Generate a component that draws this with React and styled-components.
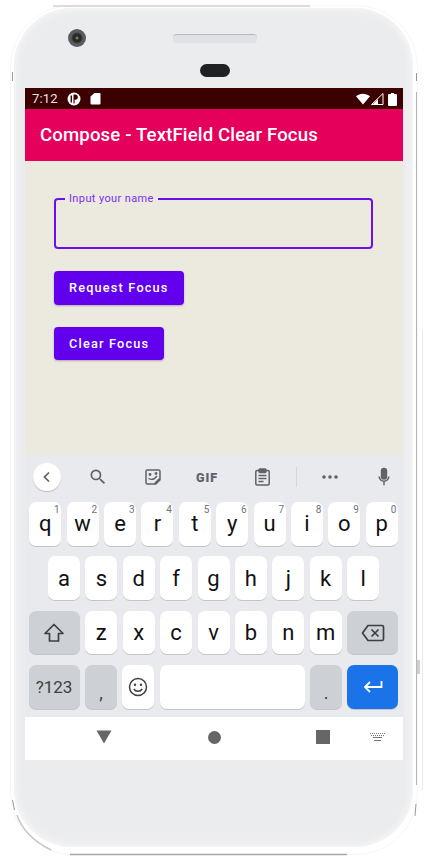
import React from "react"
import styled, { createGlobalStyle } from 'styled-components'

const GlobalStyle = createGlobalStyle`
    html, body {
        margin: 0;
        padding: 0;
        background: #fff;
    }
    * {
        box-sizing: border-box;
    }
`

const Page = styled.div`
    position: relative;
    width: 427px;
    height: 860px;
    padding: 8px 0 0 14px;
    overflow: hidden;
    background: #fff;
    font-family: Roboto, "Liberation Sans", sans-serif;
`

const Rim = styled.svg`
    position: absolute;
    top: 0;
    left: 0;
    pointer-events: none;
`

const Phone = styled.div`
    position: relative;
    width: 399px;
    height: 839px;
    padding: 0 10px 0 11px;
    border-radius: 58px;
    background: #ebecee;
    box-shadow: inset 0 0 7px 2px #f7f7f8;
    display: flex;
    flex-direction: column;
`

const Bezel = styled.div`
    position: relative;
    height: 80px;
    flex: none;
    display: flex;
    flex-direction: column;
    align-items: center;
`

const Camera = styled.div`
    position: absolute;
    left: 43px;
    top: 21px;
    width: 18px;
    height: 18px;
    border-radius: 50%;
    background: radial-gradient(circle, #7d7a3c 0 1px, #26282a 2px 4px, #5a5d60 6px 9px);
`

const Speaker = styled.div`
    width: 84px;
    height: 9px;
    margin-top: 26px;
    margin-left: 1px;
    border-radius: 4px;
    border-top: 1px solid #b4bbc0;
    background: #e0e2e5;
`

const Sensor = styled.div`
    width: 30px;
    height: 13px;
    margin-top: 21px;
    margin-left: 1px;
    border-radius: 7px;
    background: #1f2123;
`

const Screen = styled.div`
    width: 378px;
    height: 672px;
    flex: none;
    display: flex;
    flex-direction: column;
`

const StatusBar = styled.div`
    height: 21px;
    flex: none;
    padding: 0 6px 0 7px;
    display: flex;
    align-items: center;
    background: #3c0000;
    color: #eee3e3;
    font-size: 13px;
`

const StatusTime = styled.span`
    width: 35px;
    letter-spacing: 0.2px;
`

const StatusGroup = styled.div`
    display: flex;
    align-items: center;
    gap: 9px;
    margin-left: ${props => props.$end ? 'auto' : '0'};
`

const AppBar = styled.div`
    height: 52px;
    flex: none;
    padding-left: 15px;
    display: flex;
    align-items: center;
    background: #e5005c;
    color: #fff;
    font-size: 18.6px;
    font-weight: 500;
    letter-spacing: 0.14px;
`

const Content = styled.div`
    height: 294px;
    flex: none;
    padding: 37px 30px 0 29px;
    display: flex;
    flex-direction: column;
    align-items: flex-start;
    gap: 22px;
    background: #ece9df;
`

const Field = styled.div`
    position: relative;
    width: 319px;
    height: 51px;
`

const FieldLabel = styled.label`
    position: absolute;
    left: 11px;
    top: -6px;
    padding: 0 4px;
    background: #ece9df;
    color: #7b2ff0;
    font-size: 11px;
    line-height: 13px;
    letter-spacing: 0.38px;
`

const FieldInput = styled.input`
    display: block;
    width: 100%;
    height: 100%;
    border: 2px solid #6a10ee;
    border-radius: 4px;
    outline: none;
    background: transparent;
`

const Button = styled.button`
    height: 33.5px;
    padding: 0 15px;
    border: 0;
    border-radius: 4px;
    background: #6200ee;
    color: #fff;
    font-family: inherit;
    font-size: 12.7px;
    font-weight: 500;
    letter-spacing: 1.2px;
    box-shadow: 0 1px 2px rgba(60, 40, 110, 0.35);
`

const Keyboard = styled.div`
    height: 262px;
    flex: none;
    display: flex;
    flex-direction: column;
    background: #e8eaed;
`

const Toolbar = styled.div`
    height: 47px;
    flex: none;
    padding-bottom: 3px;
    display: grid;
    grid-template-columns: 44px 58px 52px 56px 54px 14px 54px 46px;
    align-items: center;
    justify-items: center;
`

const BackButton = styled.div`
    width: 28px;
    height: 28px;
    border-radius: 50%;
    background: #fff;
    box-shadow: 0 1px 1px rgba(60, 64, 67, 0.25);
    display: flex;
    align-items: center;
    justify-content: center;
`

const GifLabel = styled.span`
    color: #5f6368;
    font-size: 12.5px;
    font-weight: 900;
    letter-spacing: 1px;
`

const Divider = styled.div`
    width: 1px;
    height: 20px;
    background: #d5d7da;
`

const MicSlot = styled.div`
    padding-left: 8px;
    display: flex;
`

const Rows = styled.div`
    padding: 0 5px 0 4px;
    display: flex;
    flex-direction: column;
    gap: 10.9px;
`

const KeyRow = styled.div`
    height: 43.5px;
    display: flex;
    justify-content: center;
    gap: 5.4px;
`

const Key = styled.div`
    position: relative;
    width: ${props => props.$width || 32}px;
    flex: none;
    border-radius: 7px;
    background: ${props => props.$tone === 'gray' ? '#cdd0d5' : props.$tone === 'blue' ? '#1a73e8' : '#fff'};
    box-shadow: 0 1px 0 #c2c5ca;
    display: flex;
    align-items: center;
    justify-content: center;
    color: ${props => props.$tone === 'gray' ? '#3c4043' : '#111'};
    font-size: ${props => props.$small ? 17 : 22}px;
`

const Hint = styled.span`
    position: absolute;
    top: 2px;
    right: 1.5px;
    color: #6f7377;
    font-size: 10px;
    line-height: 12px;
`

const Punct = styled.span`
    margin-top: 12px;
    font-size: 18px;
`

const NavBar = styled.div`
    height: 43px;
    flex: none;
    padding: 0 0 3px 62px;
    display: grid;
    grid-template-columns: 110px 109px 54px 34px;
    align-items: center;
    background: #fff;
`

const NavSlot = styled.div`
    width: 34px;
    display: flex;
    justify-content: center;
`

const Triangle = () => (
    <svg width="16" height="14" viewBox="0 0 16 14"><path d="M0.5 0.5h15L8 13.5z" fill="#666" /></svg>
)

const Icon = ({ size = 24, box = 24, color = '#5f6368', children }) => (
    <svg width={size} height={size} viewBox={`0 0 ${box} ${box}`} fill={color}>{children}</svg>
)

const rows = [
    ['q1', 'w2', 'e3', 'r4', 't5', 'y6', 'u7', 'i8', 'o9', 'p0'],
    ['a', 's', 'd', 'f', 'g', 'h', 'j', 'k', 'l'],
]

const lowerLetters = ['z', 'x', 'c', 'v', 'b', 'n', 'm']

const App = () => (
    <Page>
        <GlobalStyle />
        <Phone>
            <Bezel>
                <Camera />
                <Speaker />
                <Sensor />
            </Bezel>
            <Screen>
                <StatusBar>
                    <StatusTime>7:12</StatusTime>
                    <StatusGroup>
                        <svg width="14" height="14" viewBox="0 0 14 14">
                            <circle cx="7" cy="7" r="6.5" fill="#fff" />
                            <path d="M6.5 2.5h1.7a2.6 2.6 0 0 1 0 5.2H7.6v3.8H6.5z" fill="#3c0000" />
                            <rect x="3.6" y="3.5" width="1.4" height="7" fill="#3c0000" />
                        </svg>
                        <svg width="11" height="13" viewBox="0 0 11 13">
                            <path d="M4.5 1h5a1 1 0 0 1 1 1v9.5a1 1 0 0 1-1 1h-8a1 1 0 0 1-1-1V4.5z" fill="#fff" />
                        </svg>
                    </StatusGroup>
                    <StatusGroup $end>
                        <svg width="28" height="14" viewBox="0 0 28 14">
                            <path d="M0 4.200C3.800 0.800 10 0.800 14 4.200L7 12.500z" fill="#fff" />
                            <path d="M27 1.500v11H15.500z" fill="none" stroke="#fff" strokeWidth="1" />
                            <path d="M22 7v6h-6z" fill="#fff" />
                        </svg>
                        <svg width="9" height="14" viewBox="0 0 9 14" style={{ marginLeft: -5 }}>
                            <path d="M3 1h3v1h2a1 1 0 0 1 1 1v10a1 1 0 0 1-1 1H1a1 1 0 0 1-1-1V3a1 1 0 0 1 1-1h2z" fill="#fff" />
                        </svg>
                    </StatusGroup>
                </StatusBar>
                <AppBar>Compose - TextField Clear Focus</AppBar>
                <Content>
                    <Field>
                        <FieldLabel>Input your name</FieldLabel>
                        <FieldInput />
                    </Field>
                    <Button>Request Focus</Button>
                    <Button>Clear Focus</Button>
                </Content>
                <Keyboard>
                    <Toolbar>
                        <BackButton>
                            <svg width="14" height="14" viewBox="0 0 14 14"><path d="M9 2.500L4.500 7 9 11.500" fill="none" stroke="#5f6368" strokeWidth="1.700" /></svg>
                        </BackButton>
                        <Icon size={20}>
                            <path d="M15.500 14h-.79l-.28-.27A6.470 6.470 0 0 0 16 9.500 6.500 6.500 0 1 0 9.500 16c1.610 0 3.090-.59 4.230-1.570l.27.28v.79l5 4.990L20.490 19l-4.990-5zm-6 0C7.010 14 5 11.990 5 9.500S7.010 5 9.500 5 14 7.010 14 9.500 11.990 14 9.500 14z" />
                        </Icon>
                        <svg width="16" height="16" viewBox="0 0 16 16" fill="none" stroke="#5f6368" strokeWidth="1.500">
                            <path d="M2.500 1h11a1.500 1.500 0 0 1 1.500 1.500V10l-5 5H2.500A1.500 1.500 0 0 1 1 13.500v-11A1.500 1.500 0 0 1 2.500 1z" />
                            <path d="M3.500 9.500c3 1.500 6 1 8.500-2.500" strokeWidth="1.300" />
                            <path d="M10 15l5-5" strokeWidth="2.500" />
                            <circle cx="5" cy="5.500" r="0.700" fill="#5f6368" />
                            <circle cx="11" cy="4.500" r="0.700" fill="#5f6368" />
                        </svg>
                        <GifLabel>GIF</GifLabel>
                        <svg width="15" height="18" viewBox="0 0 15 18" fill="none" stroke="#5f6368" strokeWidth="1.500">
                            <path d="M4 2.500H2A1.200 1.200 0 0 0 .8 3.700v12.100A1.200 1.200 0 0 0 2 17h11a1.200 1.200 0 0 0 1.200-1.200V3.700A1.200 1.200 0 0 0 13 2.500h-2" />
                            <rect x="4" y="1" width="7" height="3.500" rx="1" fill="#5f6368" />
                            <path d="M3.500 7.500h8M3.500 10.500h8M3.500 13.500h5" />
                        </svg>
                        <Divider />
                        <svg width="16" height="4" viewBox="0 0 16 4" fill="#5f6368">
                            <circle cx="2" cy="2" r="1.800" />
                            <circle cx="8" cy="2" r="1.800" />
                            <circle cx="14" cy="2" r="1.800" />
                        </svg>
                        <MicSlot>
                            <Icon size={22}>
                                <path d="M12 15a3.500 3.500 0 0 0 3.500-3.500v-6a3.500 3.500 0 0 0-7 0v6A3.500 3.500 0 0 0 12 15z" />
                                <path d="M18 11.500h-1.700c0 2.600-2 4.400-4.300 4.400s-4.300-1.800-4.300-4.400H6c0 3 2.400 5.400 5.200 5.800V21h1.600v-3.700c2.800-.4 5.200-2.800 5.200-5.800z" />
                            </Icon>
                        </MicSlot>
                    </Toolbar>
                    <Rows>
                        {rows.map(row => (
                            <KeyRow key={row[0]}>
                                {row.map(item => (
                                    <Key key={item}>
                                        {item[0]}
                                        {item[1] && <Hint>{item[1]}</Hint>}
                                    </Key>
                                ))}
                            </KeyRow>
                        ))}
                        <KeyRow>
                            <Key $tone="gray" $width={51}>
                                <svg width="22" height="22" viewBox="0 0 22 22"><path d="M11 2.500L20 11.500H15.500V19H6.500V11.500H2z" fill="none" stroke="#3c4043" strokeWidth="1.700" strokeLinejoin="round" /></svg>
                            </Key>
                            {lowerLetters.map(letter => <Key key={letter}>{letter}</Key>)}
                            <Key $tone="gray" $width={51}>
                                <svg width="24" height="18" viewBox="0 0 24 18" fill="none" stroke="#3c4043" strokeWidth="1.700">
                                    <path d="M7 1.500h14a1.500 1.500 0 0 1 1.500 1.500v12a1.500 1.500 0 0 1-1.500 1.500H7L1.500 9z" strokeLinejoin="round" />
                                    <path d="M10.500 5.500l7 7M17.500 5.500l-7 7" />
                                </svg>
                            </Key>
                        </KeyRow>
                        <KeyRow>
                            <Key $tone="gray" $width={51} $small>?123</Key>
                            <Key $tone="gray"><Punct>,</Punct></Key>
                            <Key>
                                <svg width="20" height="20" viewBox="0 0 20 20" fill="none" stroke="#3c4043" strokeWidth="1.500">
                                    <circle cx="10" cy="10" r="8.500" />
                                    <path d="M5.800 12c1.800 3 6.600 3 8.400 0" />
                                    <circle cx="7" cy="7.800" r="0.500" />
                                    <circle cx="13" cy="7.800" r="0.500" />
                                </svg>
                            </Key>
                            <Key $width={145} />
                            <Key $tone="gray"><Punct>.</Punct></Key>
                            <Key $tone="blue" $width={51}>
                                <svg width="20" height="14" viewBox="0 0 20 14" fill="none" stroke="#fff" strokeWidth="1.800">
                                    <path d="M18.500 1v6H2.500M7 2L2 7l5 5" />
                                </svg>
                            </Key>
                        </KeyRow>
                    </Rows>
                </Keyboard>
                <NavBar>
                    <NavSlot><Triangle /></NavSlot>
                    <NavSlot><svg width="13" height="13"><circle cx="6.500" cy="6.500" r="6.500" fill="#666" /></svg></NavSlot>
                    <NavSlot><svg width="14" height="14"><rect width="14" height="14" fill="#666" /></svg></NavSlot>
                    <NavSlot>
                        <svg width="15" height="8" viewBox="0 0 15 8" fill="#777">
                            <path d="M0 0h1v1H0zM2 0h1v1H2zM4 0h1v1H4zM6 0h1v1H6zM8 0h1v1H8zM10 0h1v1h-1zM12 0h1v1h-1zM14 0h1v1h-1zM1 2h1v1H1zM3 2h1v1H3zM5 2h1v1H5zM7 2h1v1H7zM9 2h1v1H9zM11 2h1v1h-1zM13 2h1v1h-1zM3 4h9v1H3zM4 7h7v1H4z" />
                        </svg>
                    </NavSlot>
                </NavBar>
            </Screen>
        </Phone>
        <Rim width="427" height="860" viewBox="0 0 427 860" fill="none">
            <rect x="10.500" y="5.500" width="407" height="849" rx="62" stroke="#f8f7f7" strokeWidth="1" />
            <path d="M53 6H310" stroke="#d6cfd0" strokeWidth="1.500" />
            <path d="M70 854.500H347" stroke="#a8a6a6" strokeWidth="1.500" />
            <path d="M12.500 72v9M416.500 73v8M12.500 800l2 10M416 804l-1 12" stroke="#9a9a9a" strokeWidth="1" />
            <path d="M416.500 92V785" stroke="#b5b5b8" strokeWidth="1" />
            <path d="M422.500 330V790" stroke="#ece8e8" strokeWidth="1" />
            <path d="M418.500 660v14" stroke="#cfcfcf" strokeWidth="3" />
            <path d="M17 815c4 12 14 25 34 35" stroke="#c8c6c6" strokeWidth="1.500" />
        </Rim>
    </Page>
)

export default App
